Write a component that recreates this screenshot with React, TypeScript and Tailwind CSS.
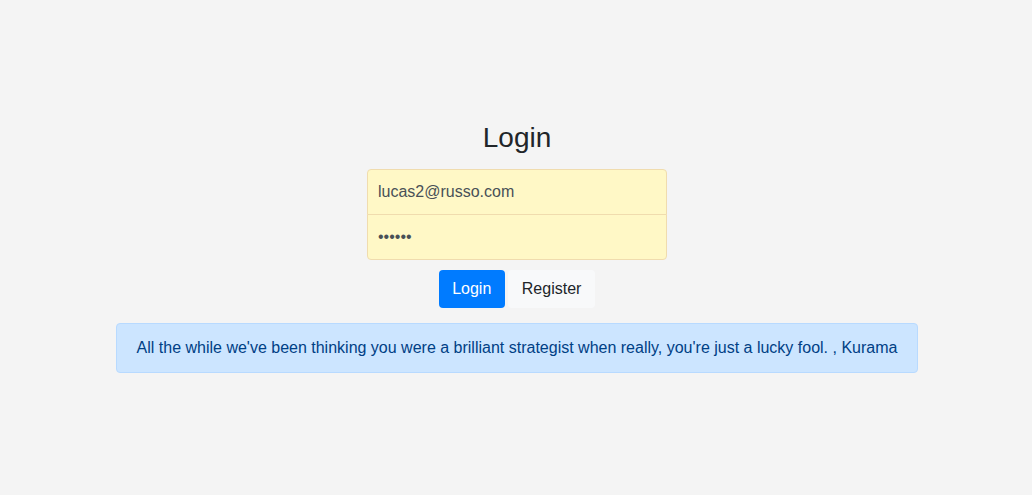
export default function App() {
  return (
    <div className="min-h-screen bg-[#f4f4f4] flex flex-col items-center pl-[2px] pt-[121px] font-['Liberation_Sans',Arial,sans-serif] text-[#212529]">
      <h3 className="text-[28px] leading-[1.2] font-normal mb-[14px]">Login</h3>

      <form className="w-[300px] flex flex-col" onSubmit={(e) => e.preventDefault()}>
        <input
          type="email"
          defaultValue="lucas2@russo.com"
          className="h-[46px] px-[10px] text-base text-[#495057] bg-[#fff8c6] border border-[#f0dcae] rounded-t-[4px] outline-none"
        />
        <input
          type="password"
          defaultValue="secret"
          className="h-[46px] -mt-px px-[10px] text-base text-[#495057] bg-[#fff8c6] border border-[#f0dcae] rounded-b-[4px] outline-none"
        />
        <div className="flex justify-center gap-[3px] mt-[10px]">
          <button className="h-[38px] px-[13.5px] rounded-[4px] bg-[#007bff] text-white text-base">Login</button>
          <button className="h-[38px] px-[14px] rounded-[4px] bg-[#f8f9fa] text-[#212529] text-base">Register</button>
        </div>
      </form>

      <div className="mt-[15px] w-fit px-5 py-3 bg-[#cce5ff] border border-[#b8daff] rounded-[4px] text-[#004085] text-base leading-6">
        All the while we've been thinking you were a brilliant strategist when really, you're just a lucky fool. , Kurama
      </div>
    </div>
  );
}
